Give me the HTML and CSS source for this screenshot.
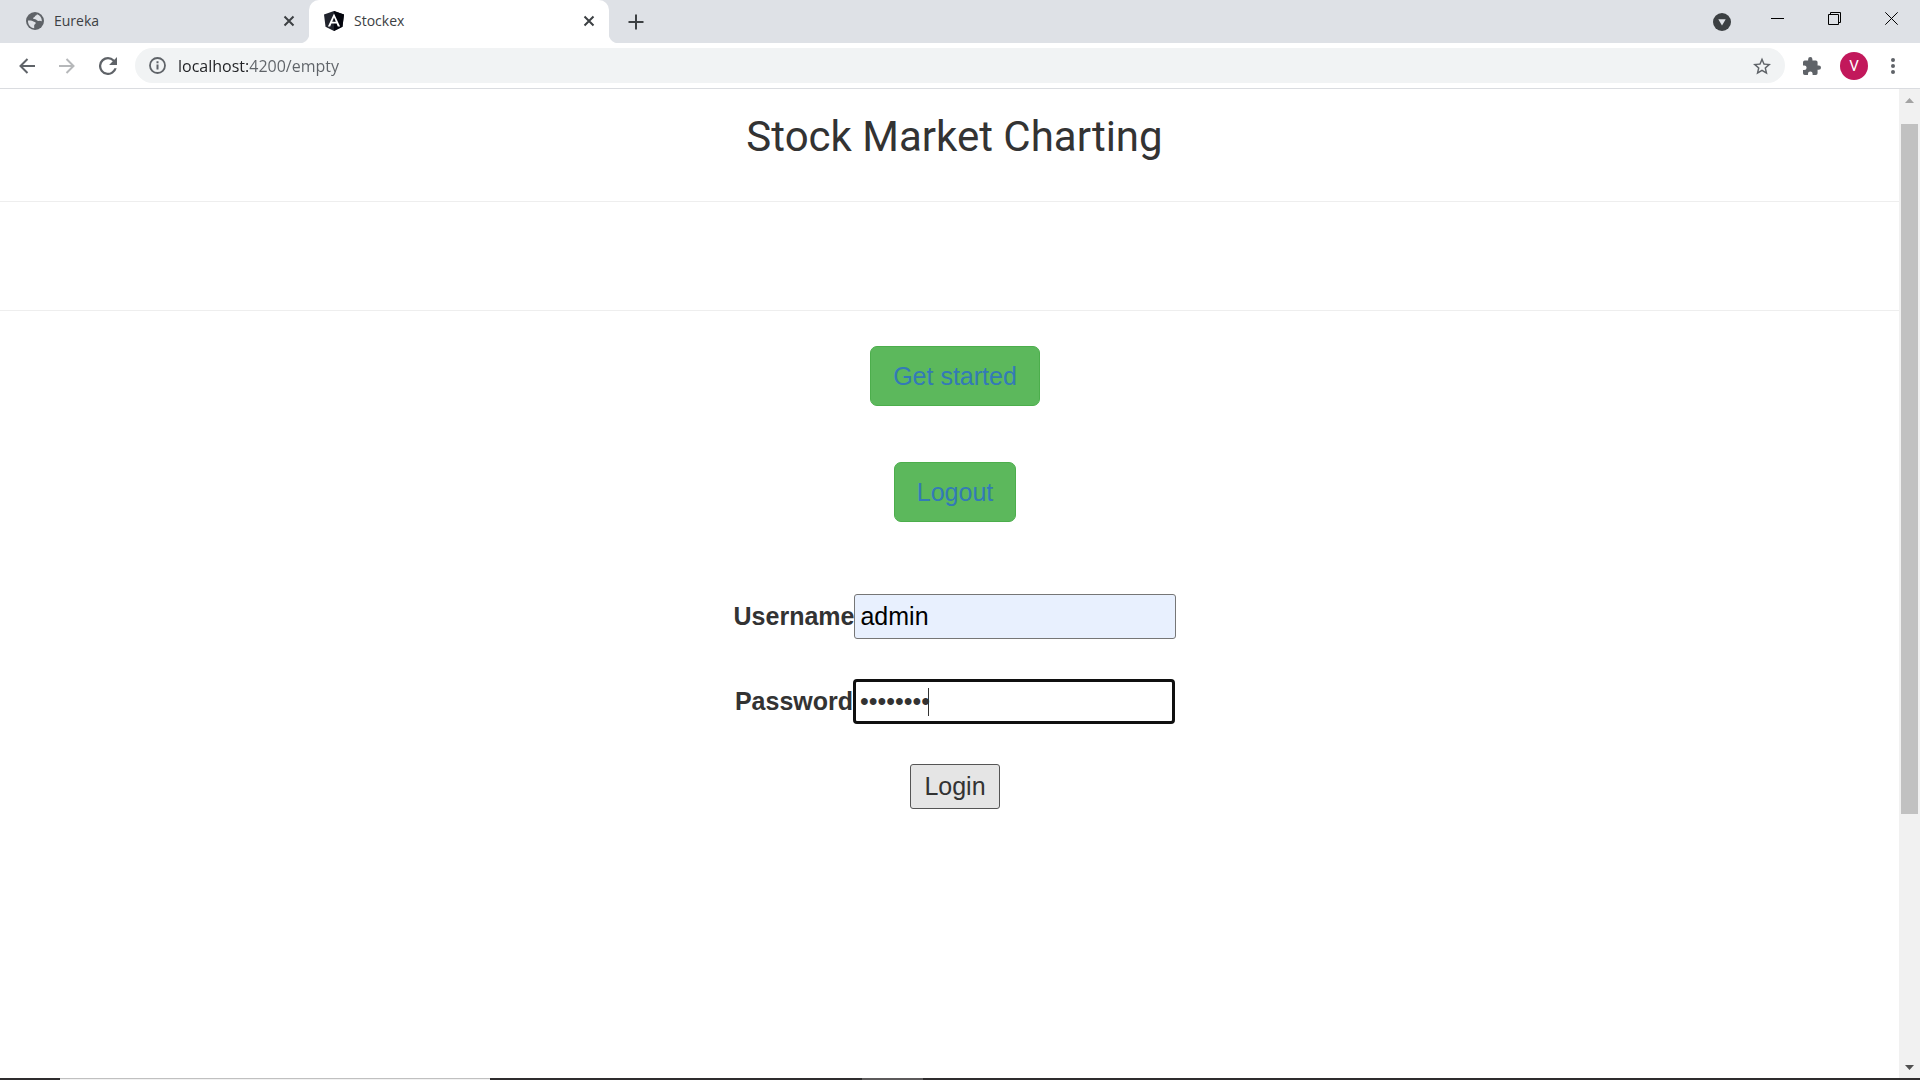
FILE: index.html
```html
<!DOCTYPE html>
<html lang="en">
<head>
<meta charset="utf-8">
<title>Stockex</title>
<link rel="stylesheet" href="styles.css">
</head>
<body>
<header class="browser">
  <div class="tabstrip">
    <div class="tab">
      <svg class="favicon" viewBox="0 0 18 18"><circle cx="9" cy="9" r="9" fill="#5f6368"/><path d="M2 8.500c2 .2 3.500-.2 5 .8 1.200.9 2.600.3 2.700 1.600.1 1.300-1.500 1.200-1.500 2.400v3C4.500 16 1.700 12.500 2 8.500zM11 2.300c-.2 1.300-1.800 1-2.100 2.200-.3 1.200-1.900.6-1.900 1.700 0 1.200 2.100.5 3 1.300.9.900 1.500 1.700 3.200 1.400 1.300-.2 1.700.3 2.700.3C15.900 5.800 14 3.200 11 2.300z" fill="#dee1e6"/></svg>
      <span class="tab-title">Eureka</span>
      <button class="icon-button" aria-label="Close Eureka"><svg class="cross" viewBox="0 0 12 12"><path d="M1.500 1.500l9 9M10.500 1.500l-9 9"/></svg></button>
    </div>
    <div class="tab tab-active">
      <svg class="favicon shield" viewBox="0 0 20 20"><path d="M10 0l10 3.400-1.500 12.300L10 20l-8.500-4.300L0 3.400z" fill="#20232c"/><path d="M10 0l10 3.400-1.500 12.300L10 20z" fill="#03050d"/><path d="M10 2.400L3.900 15.500h2.300l1.200-3h5.200l1.200 3h2.300zm0 4.200l1.800 4.100H8.200z" fill="#fff"/></svg>
      <span class="tab-title">Stockex</span>
      <button class="icon-button" aria-label="Close Stockex"><svg class="cross" viewBox="0 0 12 12"><path d="M1.500 1.500l9 9M10.500 1.500l-9 9"/></svg></button>
    </div>
    <button class="icon-button new-tab" aria-label="New tab"><svg class="plus" viewBox="0 0 16 16"><path d="M8 .5v15M.5 8h15"/></svg></button>
    <div class="window-controls">
      <button class="icon-button" aria-label="Search tabs"><svg class="search-tabs" viewBox="0 0 18 18"><circle cx="9" cy="9" r="9" fill="#3c4043"/><path d="M5.300 6.300h7.400L9 12.500z" fill="#dee1e6"/></svg></button>
      <div class="window-buttons">
        <button class="icon-button" aria-label="Minimize"><svg class="window-icon" viewBox="0 0 13 13"><path d="M0 6.500h13"/></svg></button>
        <button class="icon-button" aria-label="Restore"><svg class="window-icon" viewBox="0 0 13 13"><path d="M.5 2.500h10v10H.5zM2.500 2.500v-2h10v10h-2"/></svg></button>
        <button class="icon-button" aria-label="Close window"><svg class="window-icon" viewBox="0 0 13 13"><path d="M.3.3l12.400 12.400M12.700.3L.3 12.700"/></svg></button>
      </div>
    </div>
  </div>
  <div class="toolbar">
    <nav class="history" aria-label="History">
      <button class="icon-button" aria-label="Back"><svg class="arrow" viewBox="0 0 16 16"><path d="M16 8H1.500M8.500 1L1.500 8l7 7"/></svg></button>
      <button class="icon-button forward" aria-label="Forward"><svg class="arrow" viewBox="0 0 16 16"><path d="M0 8h14.500M7.500 1l7 7-7 7"/></svg></button>
      <button class="icon-button" aria-label="Reload"><svg class="reload" viewBox="4 4 16 16"><path d="M17.650 6.350A7.960 7.960 0 0 0 12 4a8 8 0 1 0 7.730 10h-2.080A6 6 0 1 1 12 6c1.660 0 3.140.69 4.220 1.780L13 11h7V4z" fill="#5f6368"/></svg></button>
    </nav>
    <div class="omnibox">
      <svg class="info" viewBox="0 0 17 17"><circle cx="8.500" cy="8.500" r="7.500" fill="none" stroke="#5f6368" stroke-width="1.800"/><path d="M7.500 7.500h2v5h-2zM7.500 4.300h2v2h-2z" fill="#5f6368"/></svg>
      <input class="address" type="text" value="localhost:4200/empty" aria-label="Address">
      <button class="icon-button" aria-label="Bookmark"><svg class="star" viewBox="2 2 20 19"><path d="M22 9.240l-7.190-.62L12 2 9.190 8.630 2 9.240l5.460 4.730L5.820 21 12 17.270 18.180 21l-1.630-7.030zM12 15.400l-3.760 2.270 1-4.280-3.320-2.880 4.380-.38L12 6.100l1.710 4.040 4.380.38-3.320 2.880 1 4.280z" fill="#5f6368"/></svg></button>
    </div>
    <div class="actions">
      <button class="icon-button" aria-label="Extensions"><svg class="puzzle" viewBox="2 1 21 21"><path d="M20.500 11H19V7a2 2 0 0 0-2-2h-4V3.500a2.500 2.500 0 0 0-5 0V5H4a2 2 0 0 0-1.990 2v3.800H3.500a2.700 2.700 0 0 1 0 5.400H2V20a2 2 0 0 0 2 2h3.800v-1.500a2.700 2.700 0 0 1 5.400 0V22H17a2 2 0 0 0 2-2v-4h1.500a2.500 2.500 0 0 0 0-5z" fill="#5f6368"/></svg></button>
      <button class="avatar" aria-label="Profile V">V</button>
      <button class="icon-button" aria-label="Menu"><svg class="menu" viewBox="0 0 4 16"><g fill="#5f6368"><circle cx="2" cy="2" r="2"/><circle cx="2" cy="8" r="2"/><circle cx="2" cy="14" r="2"/></g></svg></button>
    </div>
  </div>
</header>
<div class="viewport">
  <main class="page">
    <div class="band title-band"><h1 class="title">Stock Market Charting</h1></div>
    <div class="band empty-band"></div>
    <div class="content">
      <button class="action-button">Get started</button>
      <button class="action-button">Logout</button>
      <form class="login-form">
        <div class="field">
          <label for="username">Username</label>
          <input class="text-input autofilled" id="username" type="text" value="admin">
        </div>
        <div class="field">
          <label for="password">Password</label>
          <div class="password-box">
            <input class="text-input focused" id="password" type="password" value="password">
            <span class="caret"></span>
          </div>
        </div>
        <button class="login-button" type="button">Login</button>
      </form>
    </div>
  </main>
  <div class="scrollbar">
    <svg class="scroll-arrow" viewBox="0 0 9 5"><path d="M0 5L4.500 0 9 5z" fill="#a3a3a3"/></svg>
    <div class="track"><div class="thumb"></div></div>
    <svg class="scroll-arrow" viewBox="0 0 9 5"><path d="M0 0l4.500 5L9 0z" fill="#505050"/></svg>
  </div>
</div>
<footer class="taskbar">
  <span class="task-search"></span>
  <span class="task-active"></span>
</footer>
</body>
</html>
```
FILE: styles.css
```css
* { box-sizing: border-box; }

body {
  margin: 0;
  min-height: 100vh;
  display: flex;
  flex-direction: column;
  background: #fff;
  color: #333;
  font-family: "Liberation Sans", Arial, sans-serif;
  font-size: 25px;
}

button, input { font: inherit; color: inherit; }
svg { display: block; flex: none; }

.icon-button {
  display: flex;
  padding: 0;
  border: 0;
  background: none;
}

/* Tabs */
.tabstrip {
  display: flex;
  align-items: center;
  height: 43px;
  padding-left: 9px;
  background: #dee1e6;
  color: #3c4043;
  font-family: "Open Sans", sans-serif;
  font-size: 14px;
}
.tab {
  position: relative;
  display: flex;
  align-items: center;
  width: 300px;
  height: 43px;
  padding: 0 14px 2px 17px;
}
.tab-active {
  padding-left: 15px;
  border-radius: 10px 10px 0 0;
  background: #fff;
}
.tab-active::before,
.tab-active::after {
  content: "";
  position: absolute;
  bottom: 0;
  width: 10px;
  height: 10px;
}
.tab-active::before {
  right: 100%;
  background: radial-gradient(circle at 0 0, #dee1e6 10px, #fff 11px);
}
.tab-active::after {
  left: 100%;
  background: radial-gradient(circle at 100% 0, #dee1e6 10px, #fff 11px);
}
.favicon { width: 18px; height: 18px; }
.shield { width: 20px; height: 20px; }
.tab-title { flex: 1; margin-left: 10px; }
.cross { width: 12px; height: 12px; stroke: #3c4043; stroke-width: 2; }
.plus { width: 16px; height: 16px; stroke: #3c4043; stroke-width: 2; }
.new-tab { margin-left: 19px; }
.window-controls {
  display: flex;
  align-items: center;
  gap: 40px;
  margin-left: auto;
  padding: 0 22px 6px 0;
}
.window-buttons { display: flex; gap: 44px; }
.search-tabs { width: 18px; height: 18px; margin-top: 6px; }
.window-icon { width: 13px; height: 13px; fill: none; stroke: #000; stroke-width: 1; }

/* Address bar */
.toolbar {
  display: flex;
  align-items: center;
  height: 46px;
  padding: 0 21px 0 19px;
  border-bottom: 1px solid #dadce0;
}
.history { display: flex; align-items: center; gap: 24px; }
.arrow { width: 16px; height: 16px; fill: none; stroke: #5f6368; stroke-width: 2; }
.forward { opacity: .45; }
.reload { width: 18px; height: 18px; }
.omnibox {
  display: flex;
  align-items: center;
  flex: 1;
  height: 35px;
  margin: 0 18px;
  padding: 0 14px;
  border-radius: 18px;
  background: #f1f3f4;
}
.info { width: 17px; height: 17px; }
.address {
  flex: 1;
  min-width: 0;
  margin: 0 12px;
  padding: 0;
  border: 0;
  outline: 0;
  background: linear-gradient(90deg, #202124 71px, #5f6368 71px);
  background-clip: text;
  color: transparent;
  font-family: "Open Sans", sans-serif;
  font-size: 16px;
}
.star { width: 18px; height: 18px; }
.actions { display: flex; align-items: center; gap: 19px; }
.puzzle { width: 18px; height: 18px; }
.avatar {
  width: 28px;
  height: 28px;
  padding: 0;
  border: 0;
  border-radius: 50%;
  background: #c2185b;
  color: #fff;
  font-family: Roboto, sans-serif;
  font-size: 15px;
}
.menu { width: 12px; height: 16px; }

/* Page */
.viewport { display: flex; flex: 1; }
.page { flex: 1; }
.band { border-bottom: 1px solid #eee; }
.title-band { padding: 24px 0 40px 10px; }
.title {
  margin: 0;
  font-family: Roboto, sans-serif;
  font-size: 42px;
  font-weight: 400;
  line-height: 48px;
  text-align: center;
}
.empty-band { height: 109px; }
.content {
  display: flex;
  flex-direction: column;
  align-items: center;
  gap: 56px;
  padding: 35px 0 0 11px;
}
.action-button {
  height: 60px;
  padding: 0 22px;
  border: 1px solid #4cae4c;
  border-radius: 7px;
  background: #5cb85c;
  color: #337ab7;
}
.login-form {
  display: flex;
  flex-direction: column;
  align-items: center;
  gap: 40px;
  margin-top: 16px;
}
.field { display: flex; align-items: center; font-weight: 700; }
.password-box { position: relative; display: flex; }
.text-input {
  width: 322px;
  height: 45px;
  padding: 0 5px;
  border: 1px solid #767676;
  border-radius: 3px;
  outline: 0;
  font-weight: 400;
}
.autofilled { background: #e8f0fe; color: #000; }
.focused { padding: 0 4px; border: 3px solid #101010; border-radius: 4px; }
.caret {
  position: absolute;
  top: 9px;
  left: 75px;
  width: 1px;
  height: 28px;
  background: #333;
}
.login-button {
  height: 45px;
  padding: 0 13px;
  border: 1px solid #555;
  border-radius: 3px;
  background: #e5e5e5;
}

/* Scrollbar */
.scrollbar {
  display: flex;
  flex-direction: column;
  align-items: center;
  width: 21px;
  padding: 9px 0 8px;
  background: #f1f1f1;
}
.scroll-arrow { width: 9px; height: 5px; }
.track { flex: 1; width: 17px; padding: 21px 0; }
.thumb { height: 75%; background: #c1c1c1; }

/* Taskbar edge */
.taskbar { display: flex; height: 2px; background: #2f2d2e; }
.task-search {
  width: 430px;
  margin: 0 372px 0 60px;
  border-top: 1px solid #c0c0c0;
  background: #f2f2f2;
}
.task-active { width: 61px; background: #5c5a5b; }
```
